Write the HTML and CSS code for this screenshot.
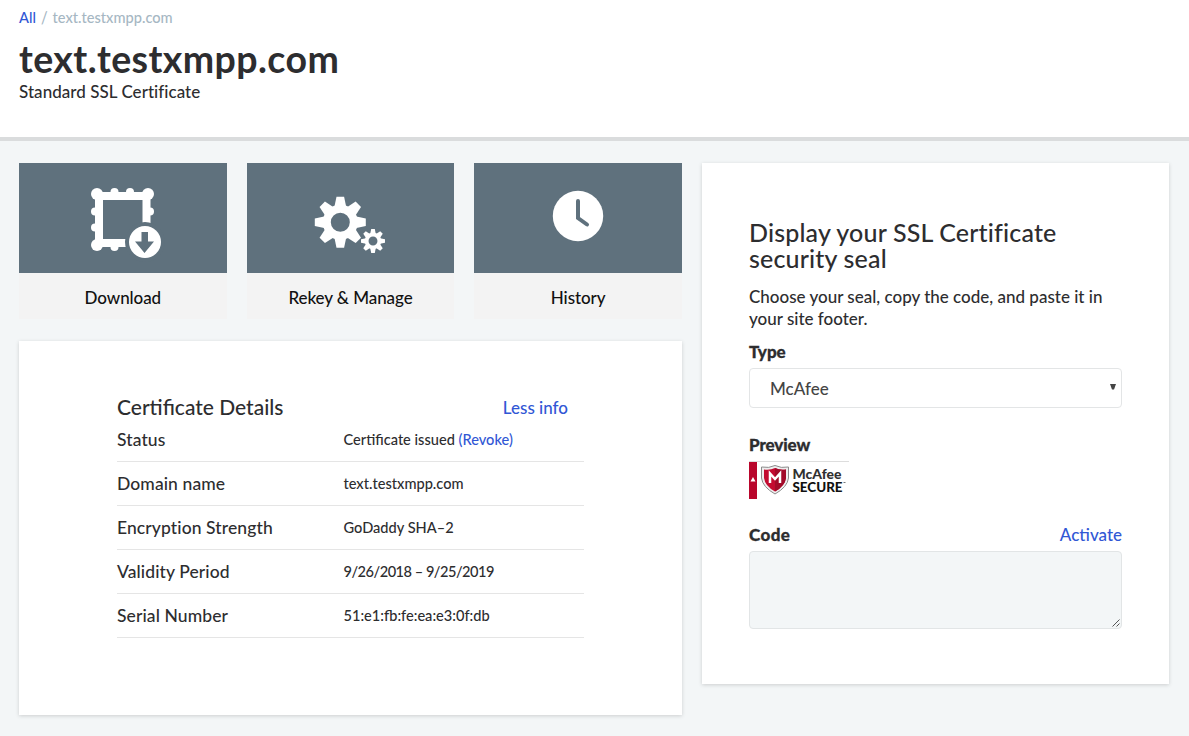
FILE: index.html
```html
<!DOCTYPE html>
<html lang="en">
<head>
<meta charset="utf-8">
<title>text.testxmpp.com</title>
<link rel="stylesheet" href="styles.css">
</head>
<body>
<header class="page-header">
  <nav class="crumbs"><a href="#">All</a><span class="slash">/</span><span>text.testxmpp.com</span></nav>
  <h1>text.testxmpp.com</h1>
  <p class="subtitle">Standard SSL Certificate</p>
</header>
<main class="content">
  <section class="left">
    <div class="tiles">
      <a class="tile" href="#">
        <span class="tile-icon">
          <svg width="208" height="110" viewBox="19 163 208 110">
            <path fill="#fff" fill-rule="evenodd" d="M95 192H150.500V247H95ZM103 200V239H142.500V200Z"/>
            <g fill="#fff"><circle cx="97" cy="194" r="6"/><circle cx="148" cy="194" r="6"/><circle cx="97" cy="245" r="6"/><circle cx="114.500" cy="192" r="4"/><circle cx="130" cy="192" r="4"/><circle cx="95" cy="211.500" r="4"/><circle cx="95" cy="227.500" r="4"/><circle cx="150" cy="211.500" r="4"/><circle cx="114.500" cy="247" r="4"/></g>
            <circle cx="145" cy="242" r="20" fill="#5f717d"/>
            <circle cx="145" cy="242" r="16" fill="#fff"/>
            <path fill="#5f717d" d="M141.500 232H148V241.500H154L144.500 253L135 241.500H141.500Z"/>
          </svg>
        </span>
        <span class="tile-label">Download</span>
      </a>
      <a class="tile" href="#">
        <span class="tile-icon">
          <svg width="208" height="110" viewBox="247 163 208 110">
            <defs>
              <g id="gear">
                <path id="tooth" d="M-6 -15L-3.800 -25.500H3.800L6 -15Z"/>
                <use href="#tooth" transform="rotate(45)"/><use href="#tooth" transform="rotate(90)"/><use href="#tooth" transform="rotate(135)"/><use href="#tooth" transform="rotate(180)"/><use href="#tooth" transform="rotate(225)"/><use href="#tooth" transform="rotate(270)"/><use href="#tooth" transform="rotate(315)"/>
                <circle r="13.500" fill="none" stroke="#fff" stroke-width="8"/>
              </g>
            </defs>
            <use href="#gear" fill="#fff" transform="translate(340.300 222.300)"/>
            <use href="#gear" fill="#fff" transform="translate(373 241) scale(.47)"/>
          </svg>
        </span>
        <span class="tile-label">Rekey &amp; Manage</span>
      </a>
      <a class="tile" href="#">
        <span class="tile-icon">
          <svg width="208" height="110" viewBox="474 163 208 110">
            <circle cx="578" cy="216" r="25.200" fill="#fff"/>
            <path d="M578 201V218L587 224.500" fill="none" stroke="#5f717d" stroke-width="4" stroke-linecap="round"/>
          </svg>
        </span>
        <span class="tile-label">History</span>
      </a>
    </div>
    <div class="card details">
      <div class="details-head"><h2>Certificate Details</h2><a href="#">Less info</a></div>
      <dl>
        <div class="row"><dt>Status</dt><dd><span>Certificate issued</span> <a href="#">(Revoke)</a></dd></div>
        <div class="row"><dt>Domain name</dt><dd>text.testxmpp.com</dd></div>
        <div class="row"><dt>Encryption Strength</dt><dd>GoDaddy SHA–2</dd></div>
        <div class="row"><dt>Validity Period</dt><dd class="period">9/26/2018 – 9/25/2019</dd></div>
        <div class="row"><dt>Serial Number</dt><dd>51:e1:fb:fe:ea:e3:0f:db</dd></div>
      </dl>
    </div>
  </section>
  <aside class="card seal">
    <h2>Display your SSL Certificate<br>security seal</h2>
    <p>Choose your seal, copy the code, and paste it in<br>your site footer.</p>
    <div class="label type-label">Type</div>
    <div class="select"><span>McAfee</span>
      <svg width="6" height="6" viewBox="0 0 6 6"><path d="M0 0H6L4 5.500H2Z" fill="#444"/></svg>
    </div>
    <div class="label preview-label">Preview</div>
    <svg class="preview" width="100" height="38" viewBox="0 0 100 38">
      <path d="M0 .5H100" stroke="#ddd"/>
      <path d="M0 1H8V38H0Z" fill="#b9062c"/>
      <path d="M1.500 20.500L4 16L6.500 20.500Z" fill="#fff"/>
      <path d="M12.500 6Q20 7.500 26 4.500Q32 7.500 39.500 6V17Q38.500 26 26 33Q13.500 26 12.500 17Z" fill="#eee" stroke="#8b8b8b" stroke-width="1"/>
      <path d="M15 8.500Q21 9.500 26 7Q31 9.500 37 8.500V17Q36 25 26 30.500Q16 25 15 17Z" fill="#c30b30"/>
      <path d="M26 7Q31 9.500 37 8.500V17Q36 25 26 30.500Z" fill="#a20a29"/>
      <path d="M21 22V12.500L26 18L31 12.500V22" fill="none" stroke="#fff" stroke-width="2.500"/>
      <text class="brand" x="43.500" y="18" textLength="49" lengthAdjust="spacingAndGlyphs">McAfee</text>
      <text class="brand secure" x="43.500" y="30.500" textLength="50" lengthAdjust="spacingAndGlyphs">SECURE</text>
      <path d="M94.500 21.500H96.500" stroke="#777"/>
    </svg>
    <div class="code-head"><span class="label code-label">Code</span><a href="#">Activate</a></div>
    <div class="code-box">
      <svg width="8" height="8" viewBox="0 0 8 8"><path d="M.5 7.500L7.500 .5M4.500 7.500L7.500 4.500" fill="none" stroke="#555" stroke-width="1"/></svg>
    </div>
  </aside>
</main>
</body>
</html>
```
FILE: styles.css
```css
* { box-sizing: border-box; margin: 0; padding: 0; }
body { background: #f3f6f7; color: #2d2d2f; font: 500 17px/22px Lato, sans-serif; min-height: 736px; }
a { color: #3157d5; text-decoration: none; }
svg { display: block; }
h1, h2 { font-weight: 500; }

.page-header { height: 141px; padding: 7px 19px 0; background: #fff; border-bottom: 4px solid #dadcdd; }
.crumbs { display: flex; font-size: 14.600px; line-height: 21px; color: #a6b7c3; }
.slash { margin: 0 5px; transform: scaleY(1.15); }
h1 { margin-top: 7px; font-size: 37.5px; line-height: 48px; font-weight: 700; letter-spacing: .4px; }
.subtitle { margin-top: -1px; line-height: 20px; letter-spacing: .04px; }

.content { display: flex; align-items: flex-start; gap: 20px; padding: 22px 20px 21px 19px; }
.left { width: 663px; }
.tiles { display: grid; grid-template-columns: repeat(3, minmax(0, 1fr)); gap: 20px; }
.tile { color: #111; text-align: center; }
.tile-icon { display: block; height: 110px; background: #5f717d; overflow: hidden; }
.tile-label { display: block; height: 46px; line-height: 49px; background: #f3f3f3; letter-spacing: -.07px; }

.card { background: #fff; box-shadow: 0 1px 4px rgba(0, 0, 0, .16); }
.details { height: 374px; margin-top: 22px; padding: 54px 98px 0; }
.details-head { display: flex; justify-content: space-between; align-items: flex-start; height: 24px; padding-right: 16px; }
.details-head h2 { font-size: 21px; line-height: 24px; }
.details-head a { line-height: 25px; }
.row { display: flex; align-items: center; height: 44px; border-bottom: 1px solid #e5e5e5; }
.row:first-child { height: 43px; padding-bottom: 1px; }
.row dt { width: 226.500px; font-size: 17.500px; letter-spacing: .1px; }
.row dd { font-size: 14.600px; padding-top: 1px; }
.row dd.period { letter-spacing: -.5px; }

.seal { flex: 1; height: 521px; padding: 56px 47px 0; }
.seal h2 { font-size: 25px; line-height: 26px; letter-spacing: .17px; }
.seal p { margin-top: 15px; }
.label { font-weight: 900; -webkit-text-stroke: .3px #2d2d2f; }
.type-label { margin-top: 11px; }
.select { display: flex; align-items: center; justify-content: space-between; height: 40px; margin-top: 5px; padding: 1px 5px 0 20px; border: 1px solid #e3e5e6; border-radius: 4px; color: #444; }
.select svg { margin-top: -3px; }
.preview-label { margin-top: 26px; letter-spacing: -.1px; }
.preview { margin-top: 5px; }
.brand { font: 900 13px/12px Lato, sans-serif; fill: #303030; }
.secure { font-size: 12.500px; fill: #111; }
.code-head { display: flex; justify-content: space-between; margin-top: 25px; }
.code-label { letter-spacing: .4px; }
.code-box { display: flex; align-items: flex-end; justify-content: flex-end; height: 78px; margin-top: 5px; padding: 1px; border: 1px solid #e2e5e6; border-radius: 4px; background: #f3f6f7; }
```
